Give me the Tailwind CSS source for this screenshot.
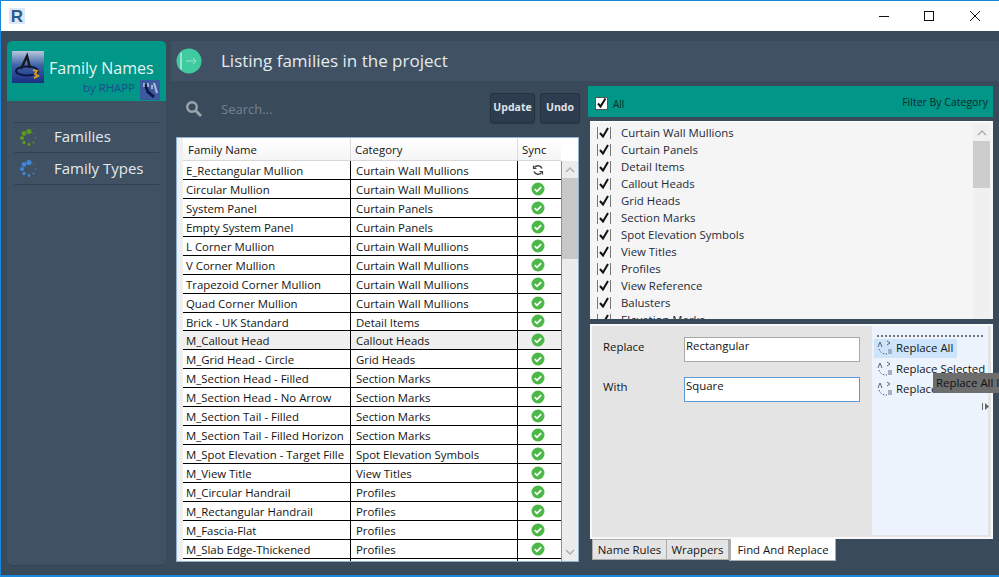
<!DOCTYPE html>
<html><head><meta charset="utf-8"><script src="https://cdn.jsdelivr.net/npm/@tailwindcss/browser@4"></script></head>
<body class="m-0 overflow-hidden">
<div class="relative w-[999px] h-[577px] flex flex-col border border-[#1a86d9] border-r-0 bg-[#394a5a] font-['Open_Sans','Noto_Sans',sans-serif] overflow-hidden text-[11.4px] text-[#141414]">
  <!-- title bar -->
  <div class="h-[30px] shrink-0 bg-white flex items-center pl-[8px]">
    <div class="w-[16px] h-[16px] bg-[#dce8f4] flex items-center justify-center"><span class="font-['Liberation_Sans'] font-bold text-[17px] leading-none text-[#2a5b8f]">R</span></div>
    <div class="flex-1"></div>
    <svg width="130" height="30" class="mr-[19px]" fill="none" stroke="#111">
      <path d="M29 15.5h10"/>
      <rect x="74.5" y="10.5" width="9" height="9"/>
      <path d="M120 10l10 10M130 10l-10 10" />
    </svg>
  </div>
  <div class="flex-1 flex pl-[6px] pt-[10px] gap-[5px] min-h-0">
    <!-- sidebar -->
    <div class="w-[159px] h-[525px] bg-[#3f5163] rounded-[5px] overflow-hidden flex flex-col border-b border-[#33424f]">
      <div class="h-[60px] bg-[#009688] relative shrink-0">
        <svg width="32" height="32" viewBox="0 0 32 32" class="absolute left-[5px] top-[10px]">
          <defs><linearGradient id="a" x1="0" y1="0" x2="0" y2="1"><stop offset="0" stop-color="#b9c7dc"/><stop offset=".45" stop-color="#3c62a8"/><stop offset="1" stop-color="#1a2f80"/></linearGradient></defs>
          <rect width="32" height="32" fill="url(#a)"/>
          <ellipse cx="15" cy="20" rx="11" ry="4.5" fill="none" stroke="#0b1540" stroke-width="2"/>
          <path d="M9 18l6-13 3 12" fill="none" stroke="#1a1a1a" stroke-width="2.5"/>
          <path d="M21 19l4 1-2 3 3 2-4 2" fill="none" stroke="#d89a20" stroke-width="2"/>
        </svg>
        <div class="absolute left-[42px] top-[15px] text-[16px] leading-[24px] text-[#e6f4f2] whitespace-nowrap">Family Names</div>
        <div class="absolute left-[76px] top-[39px] text-[11.4px] leading-[16px] text-[#1d4f8a] whitespace-nowrap">by RHAPP</div>
        <svg width="20" height="20" viewBox="0 0 20 20" class="absolute left-[133px] top-[39px]">
          <rect width="20" height="20" fill="#3b5a9e"/>
          <path d="M5 4l3 8 6 5" fill="none" stroke="#0d1a4a" stroke-width="3"/>
          <path d="M4 3v4M8 3v4M12 5v4" stroke="#dfe6f2" stroke-width="1.2"/>
          <path d="M14 3l3 10" stroke="#aebde0" stroke-width="2"/>
        </svg>
      </div>
      <div class="mx-[7px] mt-[21px] border-t border-[#33424f] border-b h-[31px] flex items-center text-[15px] text-[#e4e9ec]">
        <svg width="20" height="20" viewBox="0 0 20 20" class="ml-[5px] mr-[15px]" fill="#5c9a1c">
          <circle cx="10" cy="3.5" r="2.6"/><circle cx="5" cy="5.5" r="2.4"/><circle cx="3" cy="10" r="2.1"/><circle cx="5" cy="14.5" r="1.7"/><circle cx="10" cy="16.5" r="1.4"/><circle cx="14.5" cy="14.5" r="1"/><circle cx="16.5" cy="10" r=".7"/><circle cx="14.5" cy="5.5" r=".5"/>
        </svg>
        <span class="pb-[2px]">Families</span>
      </div>
      <div class="mx-[7px] border-b border-[#33424f] h-[32px] flex items-center text-[15px] text-[#e4e9ec]">
        <svg width="20" height="20" viewBox="0 0 20 20" class="ml-[5px] mr-[15px]" fill="#3f86d8">
          <circle cx="10" cy="3.5" r="2.6"/><circle cx="5" cy="5.5" r="2.4"/><circle cx="3" cy="10" r="2.1"/><circle cx="5" cy="14.5" r="1.7"/><circle cx="10" cy="16.5" r="1.4"/><circle cx="14.5" cy="14.5" r="1"/><circle cx="16.5" cy="10" r=".7"/><circle cx="14.5" cy="5.5" r=".5"/>
        </svg>
        <span>Family Types</span>
      </div>
    </div>
    <!-- main -->
    <div class="flex-1 flex flex-col min-w-0">
      <div class="h-[40px] bg-[#3f5163] flex items-center shrink-0">
        <svg width="26" height="26" viewBox="0 0 26 26" class="ml-[5px]">
          <circle cx="13" cy="13" r="12.5" fill="#3fcb9f"/>
          <path d="M5 4.5v17" stroke="#e8fff8" stroke-width="1"/>
          <path d="M10 13h10M17 10l3 3-3 3" stroke="#9fe6cf" fill="none" stroke-width="1"/>
        </svg>
        <div class="ml-[19px] text-[17px] text-[#e6ebee]">Listing families in the project</div>
      </div>
      <div class="flex-1 flex pl-[5px] gap-[10px] min-h-0">
        <!-- left column -->
        <div class="w-[403px] shrink-0 flex flex-col">
          <div class="h-[56px] flex items-start shrink-0 pt-[13px]">
            <svg width="18" height="18" viewBox="0 0 18 18" class="ml-[9px] mt-[6px]" fill="none" stroke="#9aa4ab">
              <circle cx="7" cy="7" r="4.8" stroke-width="2.4"/><path d="M10.5 10.5l5.5 5.5" stroke-width="2.8"/>
            </svg>
            <div class="ml-[18px] mt-[6px] text-[13px] leading-[18px] text-[#76838e]">Search...</div>
            <div class="flex-1"></div>
            <div class="w-[45px] h-[30px] -mt-[1px] rounded-[4px] bg-[#2e3c50] shadow-[inset_0_0_0_1px_#26333f,0_1px_1px_#2a3845] flex items-center justify-center text-[10.5px] font-bold text-[#dfe4e8]">Update</div>
            <div class="w-[40px] h-[30px] -mt-[1px] ml-[5px] mr-[-1px] rounded-[4px] bg-[#2e3c50] shadow-[inset_0_0_0_1px_#26333f,0_1px_1px_#2a3845] flex items-center justify-center text-[10.5px] font-bold text-[#dfe4e8]">Undo</div>
          </div>
          <!-- table -->
          <div class="h-[425px] bg-white border border-[#8fb1cf] flex overflow-hidden">
            <div class="w-[6px] shrink-0 bg-[#f0f0f0]"></div>
            <div class="w-[378px] shrink-0 flex flex-col">
              <div class="h-[23px] shrink-0 flex leading-[23px] border-b border-[#d8d8d8] bg-gradient-to-b from-white to-[#f5f5f5]">
                <div class="w-[168px] pl-[5px] border-r border-[#dcdcdc]">Family Name</div>
                <div class="w-[167px] pl-[4px] border-r border-[#dcdcdc]">Category</div>
                <div class="flex-1 pl-[4px]">Sync</div>
              </div>
              <div class="flex h-[18.95px] shrink-0 leading-[19px] border-b border-black"><div class="w-[168px] pl-[3px] border-r border-black whitespace-nowrap overflow-hidden">E_Rectangular Mullion</div><div class="w-[167px] pl-[5px] border-r border-black">Curtain Wall Mullions</div><div class="flex-1 flex items-center justify-center pr-[3px]"><svg width="12" height="12" viewBox="0 0 12 12" fill="none" stroke="#444" stroke-width="1.5"><path d="M10 4.5A4.3 4.3 0 0 0 2.4 3.6M2 7.5A4.3 4.3 0 0 0 9.6 8.4"/><path d="M1.5 1.5v3h3M10.5 10.5v-3h-3" stroke-width="1.2"/></svg></div></div>
              <div class="flex h-[18.95px] shrink-0 leading-[19px] border-b border-black"><div class="w-[168px] pl-[3px] border-r border-black whitespace-nowrap overflow-hidden">Circular Mullion</div><div class="w-[167px] pl-[5px] border-r border-black">Curtain Wall Mullions</div><div class="flex-1 flex items-center justify-center pr-[3px]"><svg width="14" height="14" viewBox="0 0 14 14"><circle cx="7" cy="7" r="6.5" fill="#4cb848"/><path d="M3.8 7.2l2.2 2.1 4.2-4.2" fill="none" stroke="#fff" stroke-width="1.8"/></svg></div></div>
              <div class="flex h-[18.95px] shrink-0 leading-[19px] border-b border-black"><div class="w-[168px] pl-[3px] border-r border-black whitespace-nowrap overflow-hidden">System Panel</div><div class="w-[167px] pl-[5px] border-r border-black">Curtain Panels</div><div class="flex-1 flex items-center justify-center pr-[3px]"><svg width="14" height="14" viewBox="0 0 14 14"><circle cx="7" cy="7" r="6.5" fill="#4cb848"/><path d="M3.8 7.2l2.2 2.1 4.2-4.2" fill="none" stroke="#fff" stroke-width="1.8"/></svg></div></div>
              <div class="flex h-[18.95px] shrink-0 leading-[19px] border-b border-black"><div class="w-[168px] pl-[3px] border-r border-black whitespace-nowrap overflow-hidden">Empty System Panel</div><div class="w-[167px] pl-[5px] border-r border-black">Curtain Panels</div><div class="flex-1 flex items-center justify-center pr-[3px]"><svg width="14" height="14" viewBox="0 0 14 14"><circle cx="7" cy="7" r="6.5" fill="#4cb848"/><path d="M3.8 7.2l2.2 2.1 4.2-4.2" fill="none" stroke="#fff" stroke-width="1.8"/></svg></div></div>
              <div class="flex h-[18.95px] shrink-0 leading-[19px] border-b border-black"><div class="w-[168px] pl-[3px] border-r border-black whitespace-nowrap overflow-hidden">L Corner Mullion</div><div class="w-[167px] pl-[5px] border-r border-black">Curtain Wall Mullions</div><div class="flex-1 flex items-center justify-center pr-[3px]"><svg width="14" height="14" viewBox="0 0 14 14"><circle cx="7" cy="7" r="6.5" fill="#4cb848"/><path d="M3.8 7.2l2.2 2.1 4.2-4.2" fill="none" stroke="#fff" stroke-width="1.8"/></svg></div></div>
              <div class="flex h-[18.95px] shrink-0 leading-[19px] border-b border-black"><div class="w-[168px] pl-[3px] border-r border-black whitespace-nowrap overflow-hidden">V Corner Mullion</div><div class="w-[167px] pl-[5px] border-r border-black">Curtain Wall Mullions</div><div class="flex-1 flex items-center justify-center pr-[3px]"><svg width="14" height="14" viewBox="0 0 14 14"><circle cx="7" cy="7" r="6.5" fill="#4cb848"/><path d="M3.8 7.2l2.2 2.1 4.2-4.2" fill="none" stroke="#fff" stroke-width="1.8"/></svg></div></div>
              <div class="flex h-[18.95px] shrink-0 leading-[19px] border-b border-black"><div class="w-[168px] pl-[3px] border-r border-black whitespace-nowrap overflow-hidden">Trapezoid Corner Mullion</div><div class="w-[167px] pl-[5px] border-r border-black">Curtain Wall Mullions</div><div class="flex-1 flex items-center justify-center pr-[3px]"><svg width="14" height="14" viewBox="0 0 14 14"><circle cx="7" cy="7" r="6.5" fill="#4cb848"/><path d="M3.8 7.2l2.2 2.1 4.2-4.2" fill="none" stroke="#fff" stroke-width="1.8"/></svg></div></div>
              <div class="flex h-[18.95px] shrink-0 leading-[19px] border-b border-black"><div class="w-[168px] pl-[3px] border-r border-black whitespace-nowrap overflow-hidden">Quad Corner Mullion</div><div class="w-[167px] pl-[5px] border-r border-black">Curtain Wall Mullions</div><div class="flex-1 flex items-center justify-center pr-[3px]"><svg width="14" height="14" viewBox="0 0 14 14"><circle cx="7" cy="7" r="6.5" fill="#4cb848"/><path d="M3.8 7.2l2.2 2.1 4.2-4.2" fill="none" stroke="#fff" stroke-width="1.8"/></svg></div></div>
              <div class="flex h-[18.95px] shrink-0 leading-[19px] border-b border-black"><div class="w-[168px] pl-[3px] border-r border-black whitespace-nowrap overflow-hidden">Brick - UK Standard</div><div class="w-[167px] pl-[5px] border-r border-black">Detail Items</div><div class="flex-1 flex items-center justify-center pr-[3px]"><svg width="14" height="14" viewBox="0 0 14 14"><circle cx="7" cy="7" r="6.5" fill="#4cb848"/><path d="M3.8 7.2l2.2 2.1 4.2-4.2" fill="none" stroke="#fff" stroke-width="1.8"/></svg></div></div>
              <div class="flex h-[18.95px] shrink-0 leading-[19px] border-b border-black bg-[#efefef]"><div class="w-[168px] pl-[3px] border-r border-black whitespace-nowrap overflow-hidden">M_Callout Head</div><div class="w-[167px] pl-[5px] border-r border-black">Callout Heads</div><div class="flex-1 flex items-center justify-center pr-[3px]"><svg width="14" height="14" viewBox="0 0 14 14"><circle cx="7" cy="7" r="6.5" fill="#4cb848"/><path d="M3.8 7.2l2.2 2.1 4.2-4.2" fill="none" stroke="#fff" stroke-width="1.8"/></svg></div></div>
              <div class="flex h-[18.95px] shrink-0 leading-[19px] border-b border-black"><div class="w-[168px] pl-[3px] border-r border-black whitespace-nowrap overflow-hidden">M_Grid Head - Circle</div><div class="w-[167px] pl-[5px] border-r border-black">Grid Heads</div><div class="flex-1 flex items-center justify-center pr-[3px]"><svg width="14" height="14" viewBox="0 0 14 14"><circle cx="7" cy="7" r="6.5" fill="#4cb848"/><path d="M3.8 7.2l2.2 2.1 4.2-4.2" fill="none" stroke="#fff" stroke-width="1.8"/></svg></div></div>
              <div class="flex h-[18.95px] shrink-0 leading-[19px] border-b border-black"><div class="w-[168px] pl-[3px] border-r border-black whitespace-nowrap overflow-hidden">M_Section Head - Filled</div><div class="w-[167px] pl-[5px] border-r border-black">Section Marks</div><div class="flex-1 flex items-center justify-center pr-[3px]"><svg width="14" height="14" viewBox="0 0 14 14"><circle cx="7" cy="7" r="6.5" fill="#4cb848"/><path d="M3.8 7.2l2.2 2.1 4.2-4.2" fill="none" stroke="#fff" stroke-width="1.8"/></svg></div></div>
              <div class="flex h-[18.95px] shrink-0 leading-[19px] border-b border-black"><div class="w-[168px] pl-[3px] border-r border-black whitespace-nowrap overflow-hidden">M_Section Head - No Arrow</div><div class="w-[167px] pl-[5px] border-r border-black">Section Marks</div><div class="flex-1 flex items-center justify-center pr-[3px]"><svg width="14" height="14" viewBox="0 0 14 14"><circle cx="7" cy="7" r="6.5" fill="#4cb848"/><path d="M3.8 7.2l2.2 2.1 4.2-4.2" fill="none" stroke="#fff" stroke-width="1.8"/></svg></div></div>
              <div class="flex h-[18.95px] shrink-0 leading-[19px] border-b border-black"><div class="w-[168px] pl-[3px] border-r border-black whitespace-nowrap overflow-hidden">M_Section Tail - Filled</div><div class="w-[167px] pl-[5px] border-r border-black">Section Marks</div><div class="flex-1 flex items-center justify-center pr-[3px]"><svg width="14" height="14" viewBox="0 0 14 14"><circle cx="7" cy="7" r="6.5" fill="#4cb848"/><path d="M3.8 7.2l2.2 2.1 4.2-4.2" fill="none" stroke="#fff" stroke-width="1.8"/></svg></div></div>
              <div class="flex h-[18.95px] shrink-0 leading-[19px] border-b border-black"><div class="w-[168px] pl-[3px] border-r border-black whitespace-nowrap overflow-hidden">M_Section Tail - Filled Horizon</div><div class="w-[167px] pl-[5px] border-r border-black">Section Marks</div><div class="flex-1 flex items-center justify-center pr-[3px]"><svg width="14" height="14" viewBox="0 0 14 14"><circle cx="7" cy="7" r="6.5" fill="#4cb848"/><path d="M3.8 7.2l2.2 2.1 4.2-4.2" fill="none" stroke="#fff" stroke-width="1.8"/></svg></div></div>
              <div class="flex h-[18.95px] shrink-0 leading-[19px] border-b border-black"><div class="w-[168px] pl-[3px] border-r border-black whitespace-nowrap overflow-hidden">M_Spot Elevation - Target Fille</div><div class="w-[167px] pl-[5px] border-r border-black">Spot Elevation Symbols</div><div class="flex-1 flex items-center justify-center pr-[3px]"><svg width="14" height="14" viewBox="0 0 14 14"><circle cx="7" cy="7" r="6.5" fill="#4cb848"/><path d="M3.8 7.2l2.2 2.1 4.2-4.2" fill="none" stroke="#fff" stroke-width="1.8"/></svg></div></div>
              <div class="flex h-[18.95px] shrink-0 leading-[19px] border-b border-black"><div class="w-[168px] pl-[3px] border-r border-black whitespace-nowrap overflow-hidden">M_View Title</div><div class="w-[167px] pl-[5px] border-r border-black">View Titles</div><div class="flex-1 flex items-center justify-center pr-[3px]"><svg width="14" height="14" viewBox="0 0 14 14"><circle cx="7" cy="7" r="6.5" fill="#4cb848"/><path d="M3.8 7.2l2.2 2.1 4.2-4.2" fill="none" stroke="#fff" stroke-width="1.8"/></svg></div></div>
              <div class="flex h-[18.95px] shrink-0 leading-[19px] border-b border-black"><div class="w-[168px] pl-[3px] border-r border-black whitespace-nowrap overflow-hidden">M_Circular Handrail</div><div class="w-[167px] pl-[5px] border-r border-black">Profiles</div><div class="flex-1 flex items-center justify-center pr-[3px]"><svg width="14" height="14" viewBox="0 0 14 14"><circle cx="7" cy="7" r="6.5" fill="#4cb848"/><path d="M3.8 7.2l2.2 2.1 4.2-4.2" fill="none" stroke="#fff" stroke-width="1.8"/></svg></div></div>
              <div class="flex h-[18.95px] shrink-0 leading-[19px] border-b border-black"><div class="w-[168px] pl-[3px] border-r border-black whitespace-nowrap overflow-hidden">M_Rectangular Handrail</div><div class="w-[167px] pl-[5px] border-r border-black">Profiles</div><div class="flex-1 flex items-center justify-center pr-[3px]"><svg width="14" height="14" viewBox="0 0 14 14"><circle cx="7" cy="7" r="6.5" fill="#4cb848"/><path d="M3.8 7.2l2.2 2.1 4.2-4.2" fill="none" stroke="#fff" stroke-width="1.8"/></svg></div></div>
              <div class="flex h-[18.95px] shrink-0 leading-[19px] border-b border-black"><div class="w-[168px] pl-[3px] border-r border-black whitespace-nowrap overflow-hidden">M_Fascia-Flat</div><div class="w-[167px] pl-[5px] border-r border-black">Profiles</div><div class="flex-1 flex items-center justify-center pr-[3px]"><svg width="14" height="14" viewBox="0 0 14 14"><circle cx="7" cy="7" r="6.5" fill="#4cb848"/><path d="M3.8 7.2l2.2 2.1 4.2-4.2" fill="none" stroke="#fff" stroke-width="1.8"/></svg></div></div>
              <div class="flex h-[18.95px] shrink-0 leading-[19px] border-b border-black"><div class="w-[168px] pl-[3px] border-r border-black whitespace-nowrap overflow-hidden">M_Slab Edge-Thickened</div><div class="w-[167px] pl-[5px] border-r border-black">Profiles</div><div class="flex-1 flex items-center justify-center pr-[3px]"><svg width="14" height="14" viewBox="0 0 14 14"><circle cx="7" cy="7" r="6.5" fill="#4cb848"/><path d="M3.8 7.2l2.2 2.1 4.2-4.2" fill="none" stroke="#fff" stroke-width="1.8"/></svg></div></div>
              <div class="flex flex-1 min-h-0"><div class="w-[168px] border-r border-black"></div><div class="w-[167px] border-r border-black"></div></div>
            </div>
            <div class="flex-1 flex flex-col bg-[#ececec] border-l border-[#909090]">
              <div class="h-[23px] bg-white -ml-px"></div>
              <div class="h-[17px] flex items-center justify-center"><svg width="10" height="6" fill="none" stroke="#adadad" stroke-width="1.4"><path d="M1 5l4-4 4 4"/></svg></div>
              <div class="h-[81px] bg-[#c8c8c8]"></div>
              <div class="flex-1"></div>
              <div class="h-[19px] flex items-center justify-center"><svg width="10" height="6" fill="none" stroke="#adadad" stroke-width="1.4"><path d="M1 1l4 4 4-4"/></svg></div>
            </div>
          </div>
        </div>
        <!-- right column -->
        <div class="w-[404px] shrink-0 flex flex-col pt-[5px]">
          <div class="h-[31px] w-[405px] -ml-[1px] bg-[#009688] relative shrink-0">
            <div class="absolute left-[7px] top-[11px] w-[13px] h-[13px] bg-white border border-[#555] flex items-center justify-center"><svg width="11" height="11" viewBox="0 0 11 11" fill="none" stroke="#111" stroke-width="2"><path d="M2 5.5l2.5 3 5-8"/></svg></div>
            <div class="absolute left-[25px] top-[11px] text-[10px] leading-[14px] text-[#0f2a26]">All</div>
            <div class="absolute right-[5px] top-[9px] text-[10.5px] leading-[14px] text-[#0f2a26]">Filter By Category</div>
          </div>
          <div class="mt-[4px] ml-[1px] h-[198px] shrink-0 bg-[#f5f5f5] flex overflow-hidden border-t border-white">
            <div class="flex-1 pt-[2px] pl-[7px] text-[#1c2a3a]">
              <div class="h-[17px] flex items-center"><svg width="14" height="14" viewBox="0 0 14 14" fill="none"><path d="M.5 1v12M13.5 1v12" stroke="#777"/><path d="M3 7l3 3.5L11 2" stroke="#111" stroke-width="2"/></svg><span class="ml-[10px]">Curtain Wall Mullions</span></div>
              <div class="h-[17px] flex items-center"><svg width="14" height="14" viewBox="0 0 14 14" fill="none"><path d="M.5 1v12M13.5 1v12" stroke="#777"/><path d="M3 7l3 3.5L11 2" stroke="#111" stroke-width="2"/></svg><span class="ml-[10px]">Curtain Panels</span></div>
              <div class="h-[17px] flex items-center"><svg width="14" height="14" viewBox="0 0 14 14" fill="none"><path d="M.5 1v12M13.5 1v12" stroke="#777"/><path d="M3 7l3 3.5L11 2" stroke="#111" stroke-width="2"/></svg><span class="ml-[10px]">Detail Items</span></div>
              <div class="h-[17px] flex items-center"><svg width="14" height="14" viewBox="0 0 14 14" fill="none"><path d="M.5 1v12M13.5 1v12" stroke="#777"/><path d="M3 7l3 3.5L11 2" stroke="#111" stroke-width="2"/></svg><span class="ml-[10px]">Callout Heads</span></div>
              <div class="h-[17px] flex items-center"><svg width="14" height="14" viewBox="0 0 14 14" fill="none"><path d="M.5 1v12M13.5 1v12" stroke="#777"/><path d="M3 7l3 3.5L11 2" stroke="#111" stroke-width="2"/></svg><span class="ml-[10px]">Grid Heads</span></div>
              <div class="h-[17px] flex items-center"><svg width="14" height="14" viewBox="0 0 14 14" fill="none"><path d="M.5 1v12M13.5 1v12" stroke="#777"/><path d="M3 7l3 3.5L11 2" stroke="#111" stroke-width="2"/></svg><span class="ml-[10px]">Section Marks</span></div>
              <div class="h-[17px] flex items-center"><svg width="14" height="14" viewBox="0 0 14 14" fill="none"><path d="M.5 1v12M13.5 1v12" stroke="#777"/><path d="M3 7l3 3.5L11 2" stroke="#111" stroke-width="2"/></svg><span class="ml-[10px]">Spot Elevation Symbols</span></div>
              <div class="h-[17px] flex items-center"><svg width="14" height="14" viewBox="0 0 14 14" fill="none"><path d="M.5 1v12M13.5 1v12" stroke="#777"/><path d="M3 7l3 3.5L11 2" stroke="#111" stroke-width="2"/></svg><span class="ml-[10px]">View Titles</span></div>
              <div class="h-[17px] flex items-center"><svg width="14" height="14" viewBox="0 0 14 14" fill="none"><path d="M.5 1v12M13.5 1v12" stroke="#777"/><path d="M3 7l3 3.5L11 2" stroke="#111" stroke-width="2"/></svg><span class="ml-[10px]">Profiles</span></div>
              <div class="h-[17px] flex items-center"><svg width="14" height="14" viewBox="0 0 14 14" fill="none"><path d="M.5 1v12M13.5 1v12" stroke="#777"/><path d="M3 7l3 3.5L11 2" stroke="#111" stroke-width="2"/></svg><span class="ml-[10px]">View Reference</span></div>
              <div class="h-[17px] flex items-center"><svg width="14" height="14" viewBox="0 0 14 14" fill="none"><path d="M.5 1v12M13.5 1v12" stroke="#777"/><path d="M3 7l3 3.5L11 2" stroke="#111" stroke-width="2"/></svg><span class="ml-[10px]">Balusters</span></div>
              <div class="h-[17px] flex items-center"><svg width="14" height="14" viewBox="0 0 14 14" fill="none"><path d="M.5 1v12M13.5 1v12" stroke="#777"/><path d="M3 7l3 3.5L11 2" stroke="#111" stroke-width="2"/></svg><span class="ml-[10px]">Elevation Marks</span></div>
            </div>
            <div class="w-[17px] mr-[3px] mt-[2px] flex flex-col bg-[#f0f0f0] shrink-0">
              <div class="h-[17px] flex items-center justify-center"><svg width="10" height="6" fill="none" stroke="#adadad" stroke-width="1.4"><path d="M1 5l4-4 4 4"/></svg></div>
              <div class="h-[47px] bg-[#cdcdcd]"></div>
            </div>
          </div>
          <div class="mt-[5px] ml-[1px] h-[215px] shrink-0 bg-[#e4e4e4] border-2 border-[#f8f8f8] flex relative">
            <div class="flex-1 relative">
              <div class="absolute left-[11px] top-[12px] leading-[18px]">Replace</div>
              <div class="absolute left-[11px] top-[52px] leading-[18px]">With</div>
              <div class="absolute left-[92px] top-[11px] w-[176px] h-[25px] bg-white border border-[#a9a9a9] pl-[1px] leading-[14px] pt-[1px]">Rectangular</div>
              <div class="absolute left-[92px] top-[51px] w-[176px] h-[25px] bg-white border border-[#5b9ad5] pl-[1px] leading-[14px] pt-[1px]">Square</div>
            </div>
            <div class="w-[116px] shrink-0 bg-[#edf3fc] mr-[3px] mb-[2px] relative pt-[9px]">
              <div class="mx-[5px] border-t-2 border-dotted border-[#777] h-0"></div>
              <div class="absolute left-[2px] top-[13px] w-[83px] h-[19px] bg-[#cde4fa]"></div>
              <div class="absolute left-[5px] top-[15px] flex items-center whitespace-nowrap h-[13px]"><svg width="16" height="15" viewBox="0 0 16 15" fill="none"><path d="M1 7l2-5 2 5M10 1l3 2-3 2" stroke="#5a6470"/><path d="M2 9c1 3 3 5 8 5" stroke="#5a6470" stroke-dasharray="1.5 1.5"/><rect x="11" y="9" width="4" height="5" fill="#9fb2c8"/></svg><span class="ml-[3px]">Replace All</span></div>
              <div class="absolute left-[5px] top-[36px] flex items-center whitespace-nowrap h-[13px]"><svg width="16" height="15" viewBox="0 0 16 15" fill="none"><path d="M1 7l2-5 2 5M10 1l3 2-3 2" stroke="#5a6470"/><path d="M2 9c1 3 3 5 8 5" stroke="#5a6470" stroke-dasharray="1.5 1.5"/><rect x="11" y="9" width="4" height="5" fill="#9fb2c8"/></svg><span class="ml-[3px]">Replace Selected</span></div>
              <div class="absolute left-[5px] top-[56px] flex items-center whitespace-nowrap h-[13px]"><svg width="16" height="15" viewBox="0 0 16 15" fill="none"><path d="M1 7l2-5 2 5M10 1l3 2-3 2" stroke="#5a6470"/><path d="M2 9c1 3 3 5 8 5" stroke="#5a6470" stroke-dasharray="1.5 1.5"/><rect x="11" y="9" width="4" height="5" fill="#9fb2c8"/></svg><span class="ml-[3px]">Replace</span></div>
              <svg width="7" height="7" viewBox="0 0 7 7" class="absolute left-[110px] top-[77px]" fill="#666"><path d="M0 0h1v7H0zM3 0l4 3.5L3 7z"/></svg>
            </div>
          </div>
          <div class="flex -mt-[1px] items-start pl-[3px]">
            <div class="h-[21px] w-[75px] mt-[1px] bg-[#e4e4e4] border border-[#acacac] flex items-center justify-center">Name Rules</div>
            <div class="h-[21px] w-[62px] mt-[1px] bg-[#e4e4e4] border border-[#acacac] border-l-0 flex items-center justify-center">Wrappers</div>
            <div class="h-[23px] w-[107px] bg-white border border-[#acacac] border-t-0 border-l-2 flex items-center justify-center pt-[2px]">Find And Replace</div>
          </div>
        </div>
      </div>
    </div>
  </div>
  <!-- tooltip -->
  <div class="absolute left-[932px] top-[372px] w-[67px] h-[20px] bg-[#6d6d6d] text-[#111] pl-[3px] leading-[19px] whitespace-nowrap overflow-hidden">Replace All Items</div>
  <div class="absolute left-0 right-0 bottom-0 h-[1px] bg-[#1a86d9]"></div>
</div>
</body></html>
